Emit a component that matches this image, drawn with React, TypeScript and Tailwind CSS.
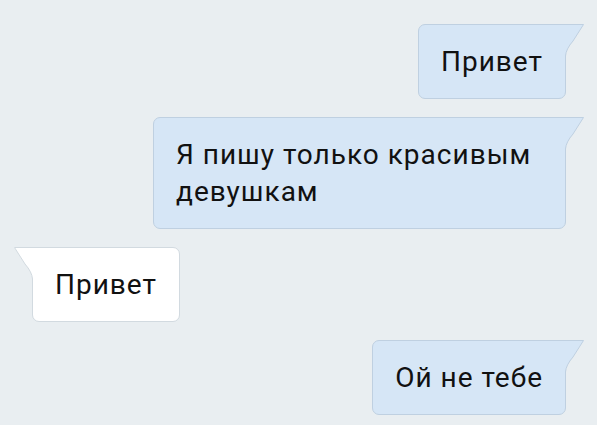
type Msg = { text: string; out: boolean; wide?: boolean };

const messages: Msg[] = [
  { text: "Привет", out: true },
  { text: "Я пишу только красивым девушкам", out: true, wide: true },
  { text: "Привет", out: false },
  { text: "Ой не тебе", out: true },
];

// little corner hook drawn on top of the bubble border
function Tail({ out }: { out: boolean }) {
  const fill = out ? "#d6e6f6" : "#ffffff";
  const stroke = out ? "#bfd0e1" : "#d2dae0";
  return (
    <svg
      width="20"
      height="32"
      viewBox="0 0 20 32"
      className={
        out
          ? "absolute top-[-1px] right-[-20px]"
          : "absolute top-[-1px] left-[-20px] -scale-x-100"
      }
    >
      <path d="M0 0 H19 L8 17 Q1 25 0.5 32 H0 Z" fill={fill} />
      <path
        d="M0 0.5 H18.5 L8 17 Q1 25 0.5 32"
        fill="none"
        stroke={stroke}
        strokeWidth="1"
      />
    </svg>
  );
}

function Bubble({ msg }: { msg: Msg }) {
  return (
    <div className={`flex ${msg.out ? "justify-end" : "justify-start"}`}>
      <div
        className={`relative rounded-[7px] border px-[22px] py-[18px] text-[28px] leading-[37px] tracking-[1px] text-[#111] ${
          msg.out
            ? "rounded-tr-none border-[#bfd0e1] bg-[#d6e6f6]"
            : "rounded-tl-none border-[#d2dae0] bg-white"
        } ${msg.wide ? "w-[413px]" : ""}`}
      >
        <Tail out={msg.out} />
        {msg.text}
      </div>
    </div>
  );
}

export default function App() {
  return (
    <div
      className="flex h-[425px] w-[597px] flex-col gap-[18px] overflow-hidden bg-[#e9eef1] pl-[32px] pr-[31px] pt-[24px]"
      style={{ fontFamily: "Roboto, 'Noto Sans', sans-serif" }}
    >
      {messages.map((m, i) => (
        <Bubble key={i} msg={m} />
      ))}
    </div>
  );
}
